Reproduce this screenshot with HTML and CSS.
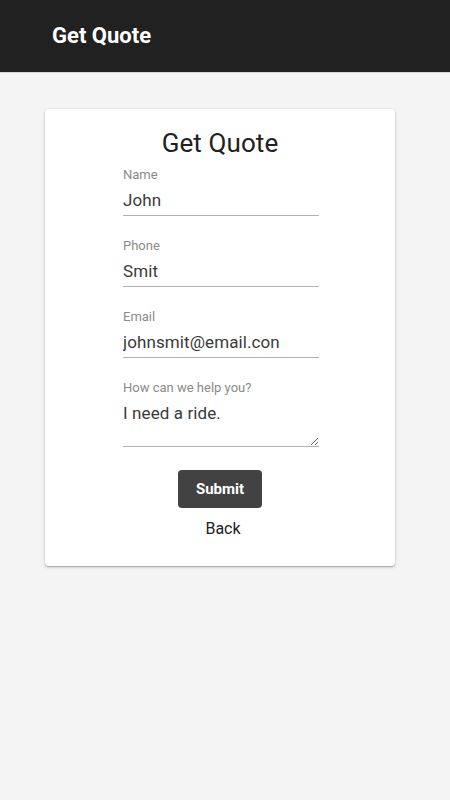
FILE: index.html
```html
<!DOCTYPE html>
<html>
<head>
<meta charset="utf-8">
<link rel="stylesheet" href="styles.css">
</head>
<body>
<header class="topbar"><span class="topbar-title">Get Quote</span></header>
<main class="page">
  <div class="card">
    <h2 class="card-title">Get Quote</h2>
    <form class="form">
      <label class="field">
        <span class="field-label">Name</span>
        <input class="field-input" type="text" value="John">
      </label>
      <label class="field">
        <span class="field-label">Phone</span>
        <input class="field-input" type="text" value="Smit">
      </label>
      <label class="field">
        <span class="field-label">Email</span>
        <input class="field-input" type="text" value="johnsmit@email.con">
      </label>
      <label class="field">
        <span class="field-label">How can we help you?</span>
        <textarea class="field-input field-area">I need a ride.</textarea>
      </label>
      <div class="actions">
        <button type="button" class="btn-submit">Submit</button>
        <button type="button" class="btn-back">Back</button>
      </div>
    </form>
  </div>
</main>
</body>
</html>
```
FILE: styles.css
```css
* { box-sizing: border-box; }
html, body { margin: 0; padding: 0; }
body {
  background: #f4f4f4;
  font-family: Roboto, "Liberation Sans", sans-serif;
  height: 800px;
}
.topbar {
  height: 73px;
  background: #212121;
  border-bottom: 1px solid #d8d8d8;
  display: flex;
  align-items: center;
  padding-left: 52px;
  padding-bottom: 1px;
}
.topbar-title {
  color: #fff;
  font-size: 22px;
  font-weight: 700;
}
.page {
  padding-top: 36px;
  padding-left: 45px;
}
.card {
  width: 350px;
  background: #fff;
  border-radius: 4px;
  box-shadow: 0 1px 3px rgba(0,0,0,0.25), 0 1px 1px rgba(0,0,0,0.14);
  padding: 18px 0 27px;
  display: flex;
  flex-direction: column;
  align-items: center;
}
.card-title {
  margin: 0 0 8px;
  font-size: 26px;
  line-height: 32px;
  font-weight: 400;
  color: #212121;
  letter-spacing: 0.1px;
}
.form {
  width: 196px;
  margin-left: 2px;
  display: flex;
  flex-direction: column;
}
.field {
  display: flex;
  flex-direction: column;
  margin-bottom: 22px;
}
.field-label {
  font-size: 13px;
  line-height: 16px;
  color: #8a8a8a;
}
.field-input {
  font-family: Roboto, "Liberation Sans", sans-serif;
  font-size: 17px;
  line-height: 22px;
  letter-spacing: 0.1px;
  color: #3a3a3a;
  border: 0;
  border-bottom: 1px solid #b0b0b0;
  padding: 6px 0 4px;
  margin: 0;
  width: 100%;
  background: transparent;
  outline: none;
}
.field-area {
  height: 51px;
  resize: vertical;
  display: block;
}
.actions {
  display: flex;
  flex-direction: column;
  align-items: center;
  margin-top: 1px;
  margin-left: -2px;
}
.btn-submit {
  width: 84px;
  height: 38px;
  background: #424242;
  color: #fff;
  border: 0;
  border-radius: 4px;
  font-family: Roboto, "Liberation Sans", sans-serif;
  font-size: 15px;
  font-weight: 700;
  padding: 0;
}
.btn-back {
  margin-top: 11px;
  margin-left: 6px;
  background: none;
  border: 0;
  padding: 0;
  font-family: Roboto, "Liberation Sans", sans-serif;
  font-size: 16px;
  line-height: 20px;
  color: #212121;
}
```
